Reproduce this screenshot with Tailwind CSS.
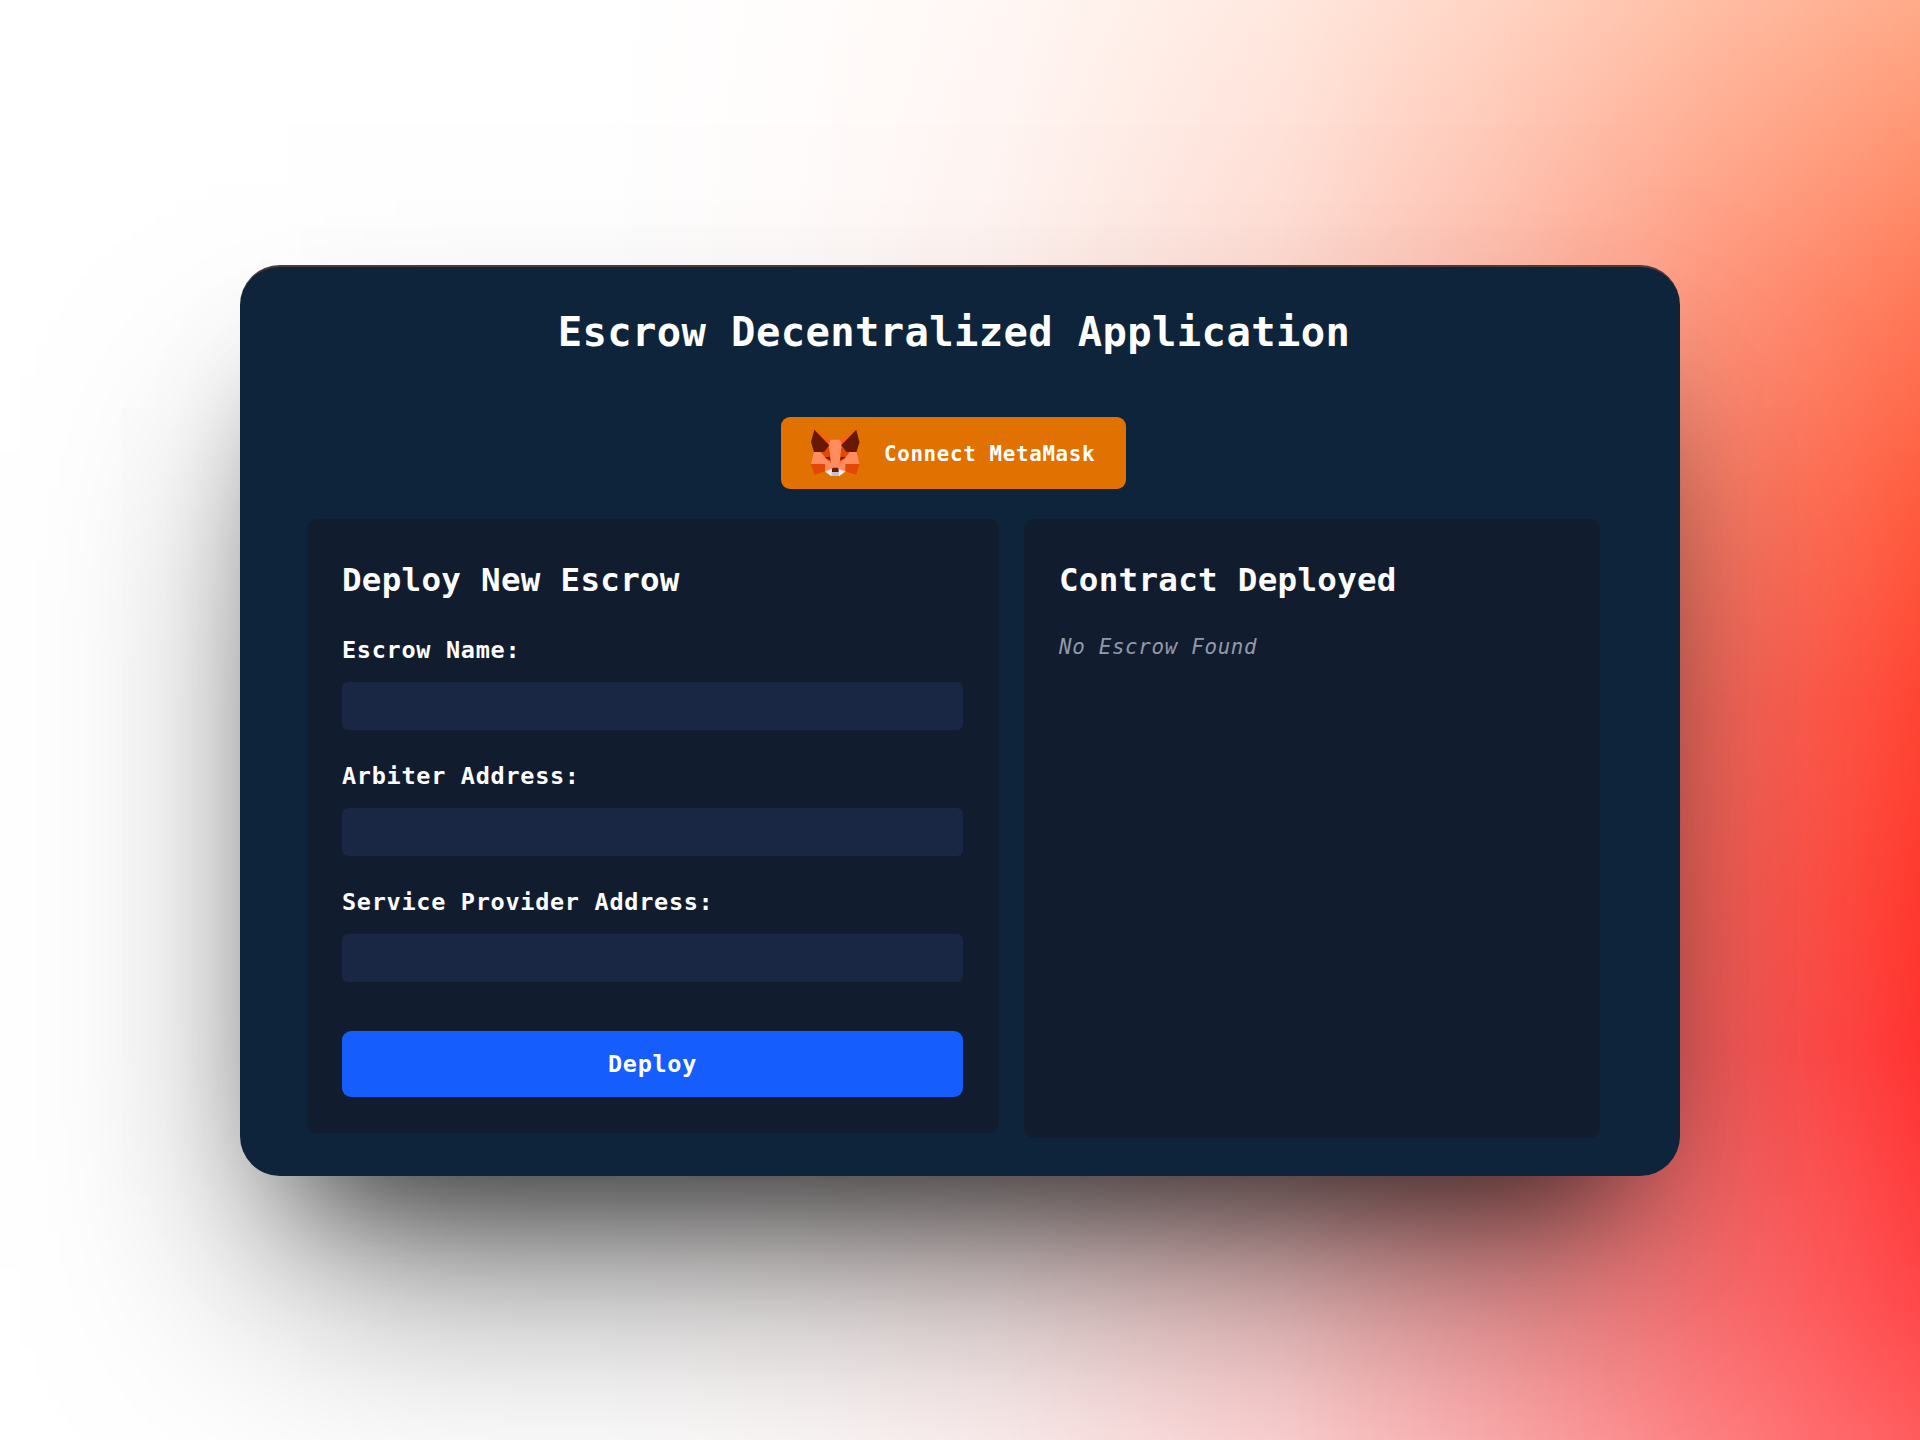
<!DOCTYPE html>
<html lang="en">
<head>
<meta charset="utf-8">
<title>Escrow Decentralized Application</title>
<script src="https://cdn.jsdelivr.net/npm/@tailwindcss/browser@4"></script>
</head>
<body class="h-[1440px] w-[1920px] overflow-hidden bg-white font-['DejaVu_Sans_Mono',monospace] text-white">
<div class="h-[1440px] w-[1920px] bg-[linear-gradient(to_right,#ffffff_600px,#fffffff8_800px,#ffffffe8_1000px,#ffffffbc_1280px,#ffffff80_1500px,#ffffff42_1700px,#ffffff08_1920px),linear-gradient(to_bottom,#ffa886_0px,#ff8f6c_150px,#ff7452_300px,#ff583a_500px,#ff402e_700px,#ff3428_900px,#ff2e2c_1050px,#ff4244_1300px,#ff5658_1440px)] px-60 pt-[265px]">
<main class="flex h-[911px] flex-col items-center rounded-[40px] border-t-2 border-[#4a3b39] bg-[#0e243b] shadow-[0_140px_220px_-48px_rgba(0,0,0,0.5),0_80px_120px_-62px_rgba(0,0,0,0.62)]">
  <h1 class="mt-[39px] -ml-3 h-[52px] text-[40.5px] leading-[52px] font-bold tracking-[0.38px] whitespace-nowrap">Escrow Decentralized Application</h1>
  <button class="mt-[59px] -ml-[13px] flex h-[72px] w-[345px] items-center rounded-[9px] bg-[#e17100] pl-[29px] text-[20.8px] font-bold tracking-[0.68px] whitespace-nowrap">
    <svg class="mr-6 h-[49px] w-[50px] shrink-0" viewBox="-1 0 50 49">
      <path fill="#ff5c16" d="M3.3.7 19 10.7H29.500L45 .7 36 23 38 35 24 42 10 35 13 23Z"/>
      <path fill="#ff8d5d" d="M3 23H13L15 30 21 35V42L14 42.500V35H0ZM45.500 23H35.500L33.500 30 27.500 35V42L34.500 42.500V35H48.500Z"/>
      <path fill="#e34807" d="M0 35H14V42.500L3.300 45.700ZM48.500 35H34.500V42.500L45.200 45.700Z"/>
      <path fill="#e34807" d="M18 18 10 23.500 14 28 21 32 19 24ZM30.500 18 38.500 23.500 34.500 28 27.500 32 29.500 24Z"/>
      <path fill="#ff8d5d" d="M19.300 10.700H29.200L30.500 16.300 28 39H20.500L18 16.300Z"/>
      <path fill="#661800" d="M3.300.7 18.300 16.300 13 23H3L0 13ZM45.200.7 30.200 16.300 35.500 23H45.500L48.500 13ZM13.500 28.500 18.500 27.800 19.500 31.500ZM35 28.500 30 27.800 29 31.500Z"/>
      <path fill="#e7ebf6" d="M14 42.500 21 40V47H20ZM34.500 42.500 27.500 40V47H28.500Z"/>
      <path fill="#c0c4cd" d="M20.500 42H28V47H20.500Z"/>
      <path fill="#661800" d="M22 38.700H26.500L27.500 40V43H21V40Z"/>
    </svg>
    <span class="pt-1">Connect MetaMask</span>
  </button>
  <div class="mt-[30px] flex w-full items-start gap-[25px] pl-[67px]">
    <section class="flex h-[614px] w-[692px] flex-col rounded-[10px] bg-[#121c2f] pt-9 pr-9 pl-[35px]">
      <h2 class="h-[50px] text-[32.5px] leading-[50px] font-bold tracking-[0.3px]">Deploy New Escrow</h2>
      <div class="mt-[29px] flex flex-col gap-[30px] text-[23.5px] leading-[32px] font-bold tracking-[0.71px]">
        <label class="flex flex-col gap-4">Escrow Name:<input class="h-12 rounded-md bg-[#1a2744]"></label>
        <label class="flex flex-col gap-4">Arbiter Address:<input class="h-12 rounded-md bg-[#1a2744]"></label>
        <label class="flex flex-col gap-4">Service Provider Address:<input class="h-12 rounded-md bg-[#1a2744]"></label>
      </div>
      <button class="mt-[49px] h-[66px] rounded-[9px] bg-[#155dfc] pt-px text-[23.5px] font-bold tracking-[0.71px]">Deploy</button>
    </section>
    <section class="h-[619px] w-[576px] rounded-[10px] bg-[#121c2f] px-[35px] pt-9">
      <h2 class="h-[50px] text-[32.5px] leading-[50px] font-bold tracking-[0.3px]">Contract Deployed</h2>
      <p class="mt-[27px] text-[20.8px] leading-[30px] tracking-[0.7px] text-[#929aa8] italic">No Escrow Found</p>
    </section>
  </div>
</main>
</div>
</body>
</html>
